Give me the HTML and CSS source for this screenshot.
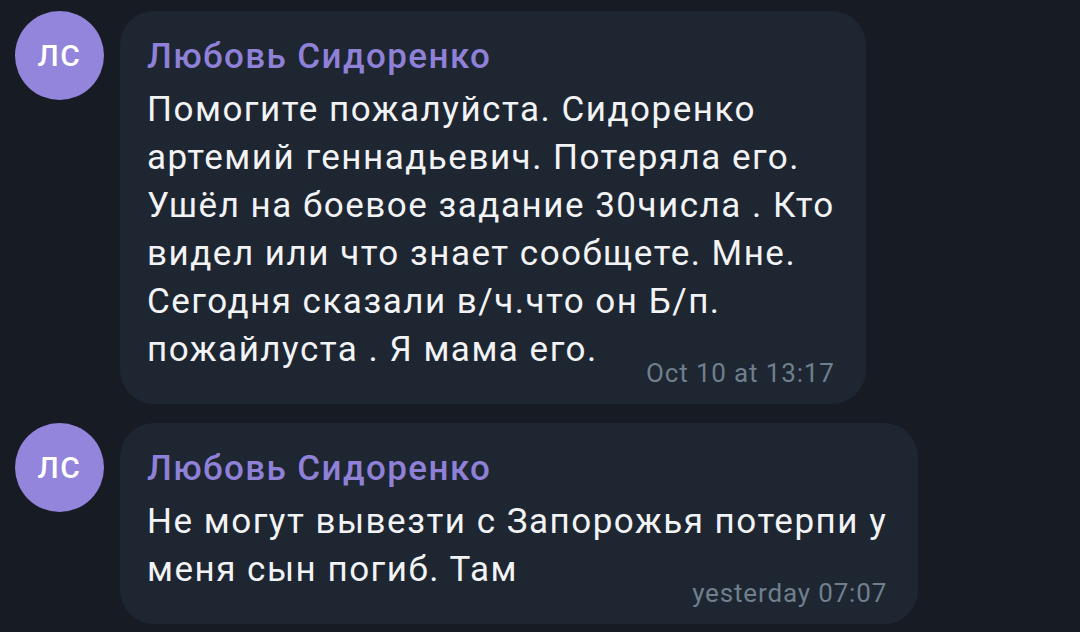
FILE: index.html
```html
<!DOCTYPE html>
<html lang="ru">
<head>
<meta charset="utf-8">
<title>Chat</title>
<link rel="stylesheet" href="styles.css">
</head>
<body>
<div class="chat">
  <div class="msg">
    <div class="avatar">ЛС</div>
    <div class="bubble">
      <div class="name">Любовь Сидоренко</div>
      <div class="text">Помогите пожалуйста. Сидоренко<br>артемий геннадьевич. Потеряла его.<br>Ушёл на боевое задание 30числа . Кто<br>видел или что знает сообщете. Мне.<br>Сегодня сказали в/ч.что он Б/п.<br>пожайлуста . Я мама его.</div>
      <div class="time">Oct 10 at 13:17</div>
    </div>
  </div>
  <div class="msg">
    <div class="avatar">ЛС</div>
    <div class="bubble">
      <div class="name">Любовь Сидоренко</div>
      <div class="text">Не могут вывезти с Запорожья потерпи у<br>меня сын погиб. Там</div>
      <div class="time">yesterday 07:07</div>
    </div>
  </div>
</div>
</body>
</html>
```
FILE: styles.css
```css
html, body {
  margin: 0;
  padding: 0;
  background: #171c24;
  height: 100%;
  overflow: hidden;
}
body {
  font-family: Roboto, "Liberation Sans", sans-serif;
  -webkit-font-smoothing: antialiased;
}
.chat {
  display: flex;
  flex-direction: column;
  gap: 19px;
  padding: 11px 0 0 16px;
}
.msg {
  display: flex;
  align-items: flex-start;
  gap: 16px;
}
.avatar {
  width: 89px;
  height: 89px;
  flex: none;
  border-radius: 50%;
  background: #9384dc;
  color: #ffffff;
  font-size: 30px;
  font-weight: 500;
  display: flex;
  align-items: center;
  justify-content: center;
  letter-spacing: 1.5px;
  margin-left: -1px;
}
.bubble {
  background: #1e2631;
  border-radius: 34px;
  padding: 26px 31px 16px 27px;
  width: fit-content;
}
.name {
  color: #8f80d8;
  font-size: 35px;
  font-weight: 500;
  line-height: 40px;
  letter-spacing: 1.4px;
  margin-bottom: 9px;
  white-space: nowrap;
}
.text {
  color: #f2f3f5;
  font-size: 35px;
  line-height: 48px;
  letter-spacing: 1.5px;
  white-space: nowrap;
}
.time {
  color: #6f7f8d;
  font-size: 26px;
  line-height: 30px;
  letter-spacing: 0.85px;
  text-align: right;
  margin-top: -16px;
}
```
